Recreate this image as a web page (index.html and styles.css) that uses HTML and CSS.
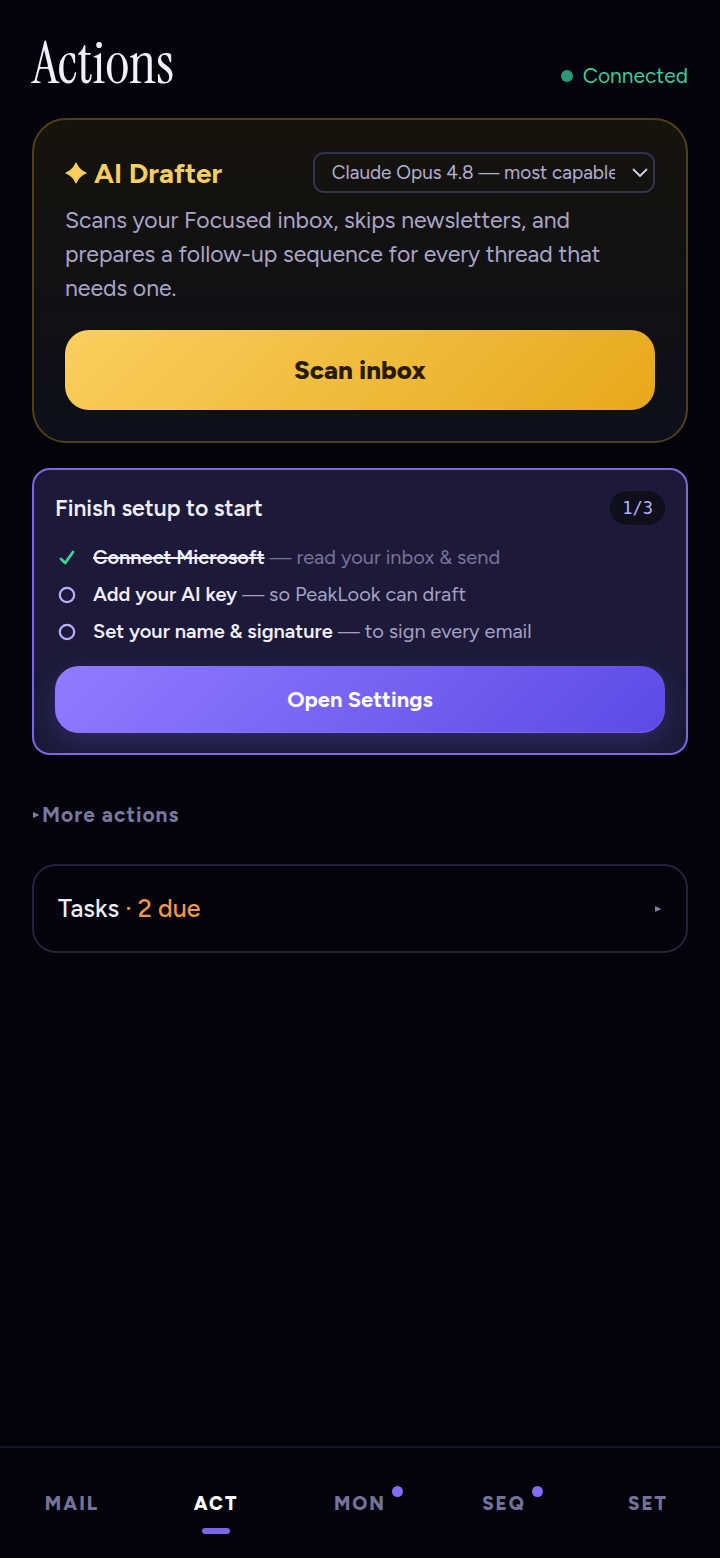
FILE: index.html
```html
<!DOCTYPE html>
<html lang="en">

<head>
    <meta charset="UTF-8">
    <meta name="viewport" content="width=device-width, initial-scale=1.0">
    <title>PeakLook - Actions</title>
    <link rel="stylesheet" href="styles.css">
</head>

<body>
    <main class="page">
        <header class="header">
            <h1 class="title">Actions</h1>
            <div class="status"><span class="status-dot"></span>Connected</div>
        </header>

        <section class="drafter">
            <div class="drafter-head">
                <h2 class="drafter-title">
                    <svg class="spark" viewBox="0 0 22 22" aria-hidden="true">
                        <path d="M11 0.8Q14 8 21.2 11Q14 14 11 21.2Q8 14 0.8 11Q8 8 11 0.8Z" fill="currentColor" stroke="currentColor" stroke-width="1" stroke-linejoin="round" />
                    </svg>
                    AI Drafter
                </h2>
                <div class="model">
                    <select class="model-select" aria-label="AI model">
                        <option>Claude Opus 4.8 — most capable</option>
                    </select>
                    <svg class="chevron" viewBox="0 0 16 10" aria-hidden="true">
                        <path d="M1.5 1.5L8 8L14.5 1.5" fill="none" stroke="currentColor" stroke-width="1.8" stroke-linecap="round" stroke-linejoin="round" />
                    </svg>
                </div>
            </div>
            <p class="drafter-text">Scans your Focused inbox, skips newsletters, and prepares a follow-up sequence for every thread that needs one.</p>
            <button class="btn btn-gold" type="button">Scan inbox</button>
        </section>

        <section class="setup">
            <div class="setup-head">
                <h2 class="setup-title">Finish setup to start</h2>
                <span class="count">1/3</span>
            </div>
            <ul class="steps">
                <li class="step done">
                    <svg class="step-icon" viewBox="0 0 24 24" aria-hidden="true">
                        <path d="M6 13L10.2 17L18 6" fill="none" stroke="#3ecf9b" stroke-width="2.8" stroke-linecap="round" stroke-linejoin="round" />
                    </svg>
                    <span><strong>Connect Microsoft</strong> — read your inbox &amp; send</span>
                </li>
                <li class="step">
                    <svg class="step-icon" viewBox="0 0 24 24" aria-hidden="true">
                        <circle cx="12" cy="12" r="7.2" fill="none" stroke="#b9aeff" stroke-width="2.2" />
                    </svg>
                    <span><strong>Add your AI key</strong> — so PeakLook can draft</span>
                </li>
                <li class="step">
                    <svg class="step-icon" viewBox="0 0 24 24" aria-hidden="true">
                        <circle cx="12" cy="12" r="7.2" fill="none" stroke="#b9aeff" stroke-width="2.2" />
                    </svg>
                    <span><strong>Set your name &amp; signature</strong> — to sign every email</span>
                </li>
            </ul>
            <button class="btn btn-purple" type="button">Open Settings</button>
        </section>

        <details class="more">
            <summary>
                <svg class="arrow" viewBox="0 0 8 8" aria-hidden="true"><path d="M1 1L7.5 4L1 7Z" fill="currentColor" /></svg>
                More actions
            </summary>
        </details>

        <details class="tasks">
            <summary>
                <span>Tasks <span class="due">· 2 due</span></span>
                <svg class="arrow" viewBox="0 0 8 8" aria-hidden="true"><path d="M1 1L7.5 4L1 7Z" fill="currentColor" /></svg>
            </summary>
        </details>
    </main>

    <nav class="tabs">
        <a class="tab" href="#mail"><span class="tab-label">MAIL</span></a>
        <a class="tab active" href="#act" aria-current="page"><span class="tab-label">ACT</span></a>
        <a class="tab" href="#mon"><span class="tab-label unread">MON</span></a>
        <a class="tab" href="#seq"><span class="tab-label unread">SEQ</span></a>
        <a class="tab" href="#set"><span class="tab-label">SET</span></a>
    </nav>
</body>

</html>
```

FILE: styles.css
```css
* {
    box-sizing: border-box;
}

body {
    display: flex;
    flex-direction: column;
    min-height: 100vh;
    margin: 0;
    font-family: Figtree, Lato, sans-serif;
    font-size: 20px;
    background: #02030b;
    color: #f1effc;
}

h1, h2, p, ul {
    margin: 0;
    padding: 0;
}

button, select {
    font-family: inherit;
}

.page {
    flex: 1;
    padding: 32px;
}

/* Header */
.header {
    display: flex;
    justify-content: space-between;
    align-items: flex-end;
    margin-bottom: 22px;
}

.title {
    font-family: "Instrument Serif", "Liberation Serif", serif;
    font-size: 58px;
    font-weight: 400;
    line-height: 64px;
}

.status {
    display: flex;
    align-items: center;
    gap: 10px;
    font-size: 21px;
    line-height: 40px;
    color: #42c99a;
}

.status-dot {
    width: 12px;
    height: 12px;
    border-radius: 50%;
    background: #289a76;
}

/* AI drafter card */
.drafter {
    padding: 32px 31px 31px;
    border: 2px solid #50401a;
    border-radius: 34px;
    background: linear-gradient(180deg, #16130c, #0d0f1b);
}

.drafter-head {
    display: flex;
    justify-content: space-between;
    align-items: center;
    margin-bottom: 10px;
}

.drafter-title {
    display: flex;
    align-items: center;
    gap: 7px;
    font-size: 28px;
    font-weight: 700;
    line-height: 32px;
    color: #f8cf5f;
}

.spark {
    width: 22px;
    height: 22px;
}

.model {
    position: relative;
    width: 58%;
}

.model-select {
    display: block;
    width: 100%;
    height: 41px;
    padding: 0 38px 0 17px;
    border: 2px solid #31324f;
    border-radius: 11px;
    appearance: none;
    background: transparent;
    font-size: 19px;
    color: #b3afcf;
}

.chevron {
    position: absolute;
    top: 16px;
    right: 7px;
    width: 16px;
    height: 10px;
    color: #d3d0e6;
    pointer-events: none;
}

.drafter-text {
    margin-bottom: 25px;
    font-size: 23px;
    line-height: 34px;
    color: #aaa6c8;
}

/* Buttons */
.btn {
    display: block;
    width: 100%;
    border: none;
    border-radius: 24px;
    font-weight: 700;
    cursor: pointer;
}

.btn-gold {
    height: 80px;
    font-size: 26px;
    font-weight: 800;
    color: #291b00;
    background: linear-gradient(135deg, #facf5e, #e7a81b);
}

.btn-purple {
    height: 67px;
    font-size: 22px;
    color: #fff;
    background: linear-gradient(135deg, #917cff, #5b4ae6);
    box-shadow: 0 8px 24px rgba(109, 84, 240, 0.25), inset 0 -1px 1px rgba(145, 124, 255, 0.5);
}

/* Setup checklist */
.setup {
    margin-top: 25px;
    padding: 21px 21px 20px;
    border: 2px solid #7b68dc;
    border-radius: 18px;
    background: #1c1a38;
    overflow: hidden;
}

.setup-head {
    display: flex;
    justify-content: space-between;
    align-items: center;
    margin-bottom: 14px;
}

.setup-title {
    font-size: 23px;
    font-weight: 600;
}

.count {
    padding: 0 12px;
    border-radius: 17px;
    font-family: "DejaVu Sans Mono", monospace;
    font-size: 17px;
    line-height: 34px;
    color: #b9aeff;
    background: #0e0f1b;
}

.steps {
    margin-bottom: 16px;
    list-style: none;
}

.step {
    display: flex;
    align-items: center;
    gap: 14px;
    font-size: 20px;
    line-height: 37px;
    color: #a5a1c5;
}

.step strong {
    font-weight: 600;
    color: #f1effc;
}

.step.done {
    color: #77739a;
}

.step.done strong {
    text-decoration: line-through;
}

.step-icon {
    flex: none;
    width: 24px;
    height: 24px;
}

/* Collapsed sections */
summary {
    display: flex;
    align-items: center;
    list-style: none;
    cursor: pointer;
}

.arrow {
    width: 8px;
    height: 8px;
    color: #807da3;
}

.more {
    margin-top: 45px;
}

.more summary {
    gap: 2px;
    font-size: 21px;
    font-weight: 700;
    line-height: 30px;
    letter-spacing: 1px;
    color: #7b789f;
}

.tasks {
    margin-top: 34px;
    border: 2px solid #242338;
    border-radius: 24px;
}

.tasks summary {
    justify-content: space-between;
    padding: 24px;
    font-size: 25px;
    font-weight: 500;
    line-height: 37px;
}

.due {
    color: #ee994c;
}

/* Bottom tabs */
.tabs {
    position: sticky;
    bottom: 0;
    display: grid;
    grid-template-columns: repeat(5, 1fr);
    height: 112px;
    border-top: 2px solid #141526;
    background: #02030b;
}

.tab {
    display: flex;
    flex-direction: column;
    align-items: center;
    gap: 11px;
    padding-top: 43px;
    font-size: 19px;
    font-weight: 800;
    line-height: 26px;
    letter-spacing: 2px;
    text-decoration: none;
    color: #74729a;
}

.tab-label {
    position: relative;
}

.active {
    color: #fff;
}

.active::after {
    content: "";
    width: 28px;
    height: 6px;
    border-radius: 3px;
    background: #7c66e8;
}

.unread::after {
    content: "";
    position: absolute;
    top: -5px;
    right: -17px;
    width: 11px;
    height: 11px;
    border-radius: 50%;
    background: #846df8;
}
```
